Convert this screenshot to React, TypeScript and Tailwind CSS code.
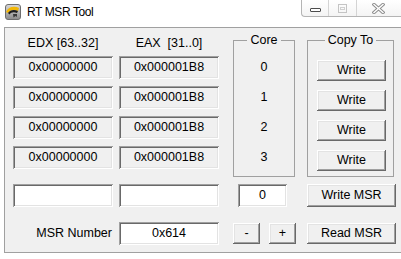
import React from "react";

// RT MSR Tool window

const rows = [0, 1, 2, 3];

const sunken =
	"shadow-[inset_1px_1px_#a0a0a0,inset_-1px_-1px_#ffffff,inset_2px_2px_#696969,inset_-2px_-2px_#e3e3e3]";
const raised =
	"shadow-[inset_-1px_-1px_#696969,inset_1px_1px_#ffffff,inset_-2px_-2px_#a0a0a0,inset_2px_2px_#e3e3e3]";

const Field = ({ value, white, className }: { value?: string; white?: boolean; className: string }) => (
	<div
		className={`${sunken} ${white ? "bg-white" : "bg-[#f0f0f0]"} ${className} shrink-0 flex items-center justify-center leading-[15px]`}
	>
		{value}
	</div>
);

const Button = ({ label, className }: { label: string; className: string }) => (
	<div className={`${raised} bg-[#f0f0f0] ${className} shrink-0 flex items-center justify-center leading-[15px]`}>
		{label}
	</div>
);

const AppIcon = () => (
	<svg width="16" height="16" viewBox="0 0 16 16">
		<defs>
			<linearGradient id="ig" x1="0" y1="0" x2="0" y2="1">
				<stop offset="0" stopColor="#d8d8d8" />
				<stop offset="1" stopColor="#8c8c8c" />
			</linearGradient>
		</defs>
		<rect x="0.5" y="0.5" width="15" height="15" rx="2.5" fill="url(#ig)" stroke="#6e6e6e" />
		<path d="M1 8 C3 3 9 1.5 14 4 L13 7 C9 5 5 6 3 9 Z" fill="#f2b705" />
		<path d="M3 9 C5 6 9 5 13 7 L12 9 C9 7.5 6 8 4.5 10.5 Z" fill="#1e1e1e" />
		<path d="M8 10 L12 10 L12 13 L10.5 12 L8.5 13.5 Z" fill="#3a3a3a" />
	</svg>
);

const CloseGlyph = () => (
	<svg width="13" height="11" viewBox="0 0 13 11">
		<path d="M2 1.5 L11 9.5 M11 1.5 L2 9.5" stroke="#8e8e8e" strokeWidth="3.4" strokeLinecap="square" />
		<path d="M2 1.5 L11 9.5 M11 1.5 L2 9.5" stroke="#ffffff" strokeWidth="1.4" strokeLinecap="square" />
	</svg>
);

const App = () => {
	return (
		<div className="w-[401px] h-[259px] bg-white overflow-hidden text-[12.5px] text-black font-['Liberation_Sans',Arial,sans-serif]">
			{/* TITLE BAR */}
			<div className="h-[27px] flex items-start">
				<div className="ml-[5px] mt-[4px]">
					<AppIcon />
				</div>
				<div className="ml-[6px] mt-[5px] text-[12px] leading-[15px] tracking-[-0.4px]">RT MSR Tool</div>

				<div className="ml-auto w-[100px] h-[17px] shrink-0 flex border-l border-b border-[#b4b4b4] rounded-bl-[4px] bg-gradient-to-b from-white to-[#f4f4f4]">
					<div className="w-[27px] flex items-center justify-center pt-[4px] border-r border-[#d4d4d4]">
						<div className="w-[11px] h-[4px] border border-[#4c4c4c] rounded-[1px] bg-white" />
					</div>
					<div className="w-[28px] flex items-center justify-center border-r border-[#d4d4d4]">
						<div className="w-[9px] h-[9px] border border-[#c4c4c4] flex items-center justify-center">
							<div className="w-[5px] h-[3px] border border-[#d0d0d0]" />
						</div>
					</div>
					<div className="flex-1 flex items-center justify-center pr-[2px]">
						<CloseGlyph />
					</div>
				</div>
			</div>

			{/* CLIENT AREA */}
			<div className="ml-[4px] h-[226px] border-y border-l border-[#a0a0a0] bg-[#f0f0f0] flex">
				{/* EDX / EAX */}
				<div className="ml-[8px] w-[206px] shrink-0 pt-[8px] flex flex-col">
					<div className="flex gap-[6px] h-[15px] leading-[15px] mb-[5px]">
						<div className="w-[100px] text-center">EDX [63..32]</div>
						<div className="w-[100px] text-center whitespace-pre">EAX  [31..0]</div>
					</div>

					<div className="flex flex-col gap-[7px]">
						{rows.map((row) => (
							<div key={row} className="flex gap-[6px]">
								<Field value="0x00000000" className="w-[100px] h-[23px]" />
								<Field value="0x000001B8" className="w-[100px] h-[23px]" />
							</div>
						))}
					</div>

					<div className="mt-[15px] flex gap-[6px]">
						<Field white className="w-[100px] h-[23px]" />
						<Field white className="w-[100px] h-[23px]" />
					</div>

					<div className="mt-[15px] flex gap-[6px] items-center">
						<div className="w-[100px] text-right pr-[1px] leading-[15px]">MSR Number</div>
						<Field white value="0x614" className="w-[100px] h-[23px]" />
					</div>
				</div>

				{/* CORE */}
				<div className="ml-[14px] w-[62px] shrink-0 flex flex-col">
					<div className="mt-[12px] h-[137px] border border-[#a0a0a0] flex flex-col">
						<div className="-mt-[8px] flex justify-center">
							<span className="bg-[#f0f0f0] px-[3px] leading-[15px]">Core</span>
						</div>
						<div className="mt-[8px] flex flex-col gap-[7px]">
							{rows.map((row) => (
								<div key={row} className="h-[23px] flex items-center justify-center leading-[15px]">
									{row}
								</div>
							))}
						</div>
					</div>

					<Field white value="0" className="mt-[7px] ml-[5px] w-[49px] h-[23px]" />

					<div className="mt-[16px] flex gap-[9px]">
						<Button label="-" className="w-[27px] h-[21px]" />
						<Button label="+" className="w-[27px] h-[21px]" />
					</div>
				</div>

				{/* COPY TO */}
				<div className="ml-[12px] w-[89px] shrink-0 flex flex-col">
					<div className="mt-[12px] w-[87px] h-[137px] border border-[#a0a0a0] flex flex-col">
						<div className="-mt-[8px] flex justify-center">
							<span className="bg-[#f0f0f0] px-[3px] leading-[15px]">Copy To</span>
						</div>
						<div className="mt-[12px] ml-[9px] flex flex-col gap-[9px]">
							{rows.map((row) => (
								<Button key={row} label="Write" className="w-[69px] h-[21px]" />
							))}
						</div>
					</div>

					<Button label="Write MSR" className="mt-[7px] w-[89px] h-[23px]" />
					<Button label="Read MSR" className="mt-[16px] w-[89px] h-[21px]" />
				</div>
			</div>
		</div>
	);
};

export default App;
